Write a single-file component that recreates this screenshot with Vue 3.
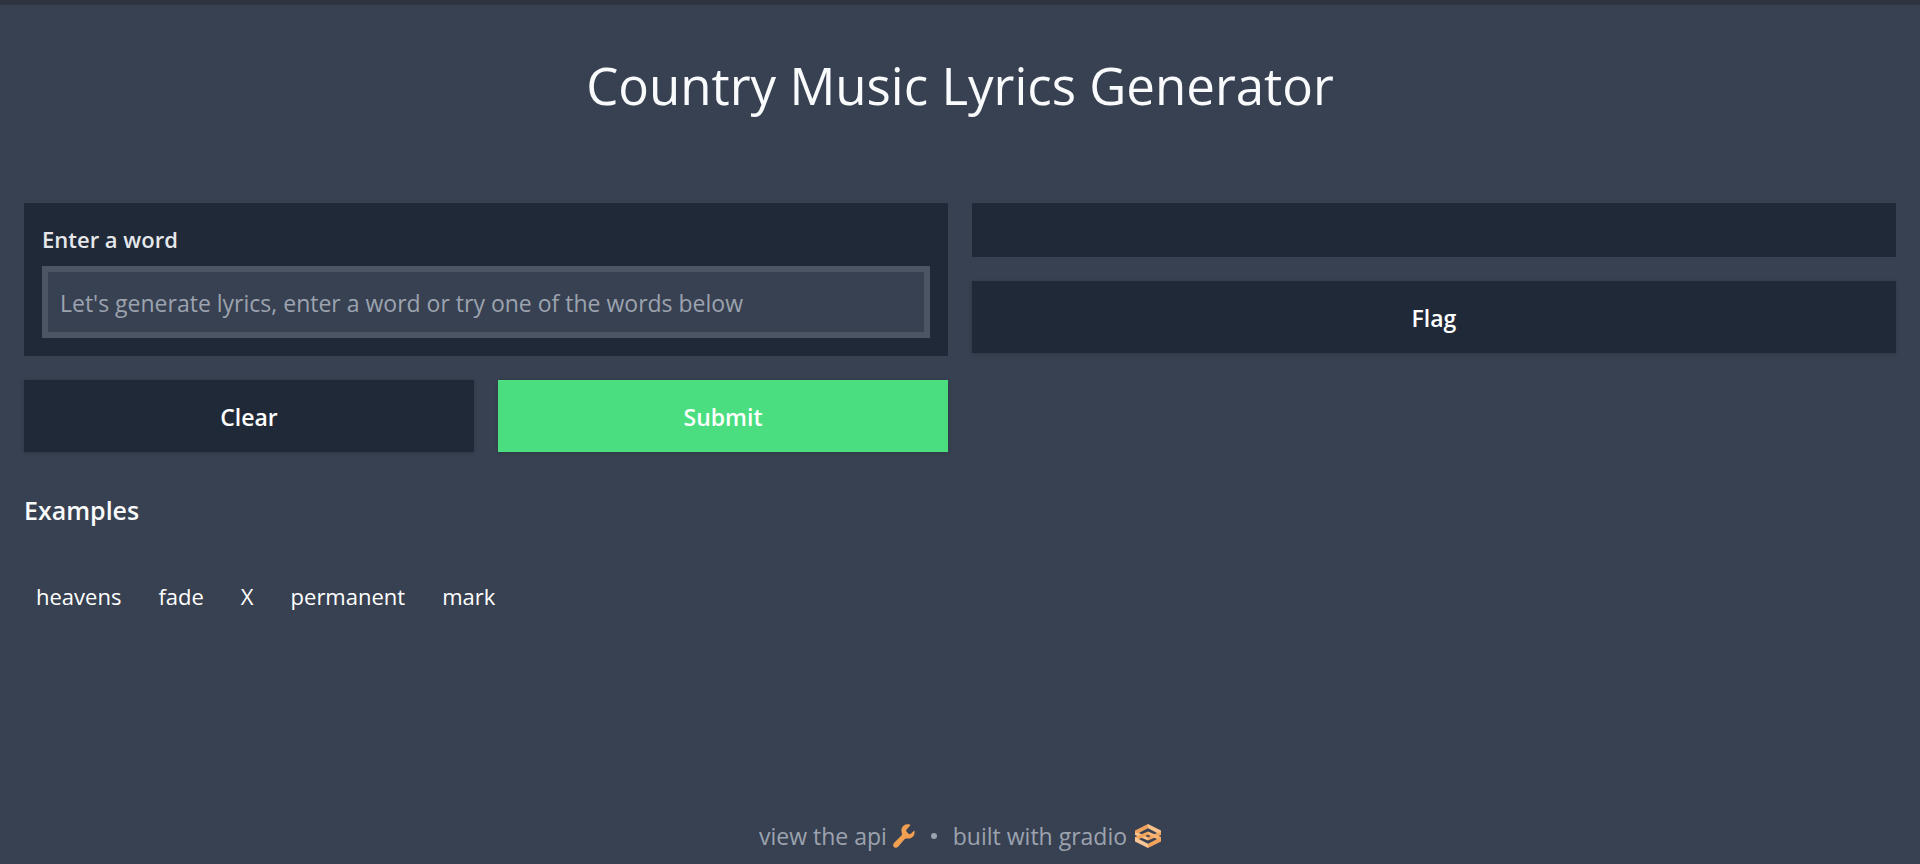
<script setup>
import { ref } from 'vue'

const word = ref('')
const examples = ['heavens', 'fade', 'X', 'permanent', 'mark']
</script>

<template>
  <div class="page">
    <h1>Country Music Lyrics Generator</h1>

    <main class="columns">
      <form class="column" @submit.prevent>
        <div class="panel field">
          <label for="word">Enter a word</label>
          <input
            id="word"
            v-model="word"
            type="text"
            placeholder="Let's generate lyrics, enter a word or try one of the words below"
          />
        </div>
        <div class="actions">
          <button type="button" @click="word = ''">Clear</button>
          <button type="submit" class="primary">Submit</button>
        </div>
      </form>
      <div class="column">
        <div class="panel output"></div>
        <button type="button">Flag</button>
      </div>
    </main>

    <section class="examples">
      <h2>Examples</h2>
      <div class="samples">
        <button v-for="item in examples" :key="item" type="button" class="sample" @click="word = item">{{ item }}</button>
      </div>
    </section>

    <footer>
      <a href="#api" class="api">view the api
        <svg width="22" height="24" viewBox="0 0 22 24" aria-hidden="true">
          <path fill="#f0a050" d="M16.8.6C13.200-.6 9.600 1.200 8.700 4.500C8.200 6.200 8.400 7.700 8.900 9.200C9.200 10.200 8.900 11 8.200 11.700L1.200 18.700C-.2 20.200-.2 22 .9 23C2 24.100 3.900 24.100 5.100 22.700L11.300 15.500C12 14.700 12.900 14.400 13.900 14.500C18.400 15.200 21.800 12 21.600 7.800C21.600 6.900 21.300 6.500 20.800 7L17.700 9.800C16.900 10.400 16.200 10.300 15.500 9.700L13.700 7.800C13 7 13 6.200 13.600 5.500L17 1.800C17.500 1.200 17.300.8 16.800.6Z" />
        </svg>
      </a>
      <span class="dot"></span>
      <a href="#gradio">built with gradio
        <svg width="26" height="24" viewBox="0 0 26 24" aria-hidden="true">
          <path fill="#f0a260" d="M13 0L0 6.500V11L13 4.300Z" />
          <path fill="#f8c08a" d="M13 0L26 6.500V11L13 4.300Z" />
          <path fill="#f8c08a" d="M0 8.500V11L13 16.500V13L4 9Z" />
          <path fill="#f0a260" d="M26 8.500V11L13 16.500V13L22 9Z" />
          <path fill="#f3a45c" d="M0 15.500V13L13 7.500V11L4 15Z" />
          <path fill="#f8b474" d="M26 15.500V13L13 7.500V11L22 15Z" />
          <path fill="#f9c797" d="M13 24L0 17.500V13L13 19.700Z" />
          <path fill="#f3a45c" d="M13 24L26 17.500V13L13 19.700Z" />
          <path fill="#5f4d4a" d="M13 10.400L15.400 12L13 13.600L10.600 12Z" />
        </svg>
      </a>
    </footer>
  </div>
</template>

<style>
body {
  margin: 0;
  background: #384151;
}
</style>

<style scoped>
.page {
  box-sizing: border-box;
  min-height: 100vh;
  display: flex;
  flex-direction: column;
  padding: 44px 24px 10px;
  border-top: 5px solid #303440;
  color: #f9fafb;
  font-family: "Segoe UI", "Open Sans", "Noto Sans", sans-serif;
  font-size: 23px;
  line-height: 36px;
}

h1 {
  margin: 0 0 82px;
  font-size: 51px;
  font-weight: 400;
  line-height: 72px;
  text-align: center;
}

.columns {
  display: grid;
  grid-template-columns: 1fr 1fr;
  gap: 24px;
}

.column {
  display: flex;
  flex-direction: column;
  gap: 24px;
}

.panel {
  padding: 18px;
  background: #202937;
}

.output {
  height: 18px;
}

.field {
  display: flex;
  flex-direction: column;
}

label {
  padding-bottom: 9px;
  color: #e5e7eb;
  font-size: 22px;
  font-weight: 600;
}

input {
  box-sizing: border-box;
  width: 100%;
  height: 72px;
  padding: 2px 12px 0;
  border: 6px solid #4b5563;
  border-radius: 0;
  outline: none;
  background: #384151;
  color: #f9fafb;
  font: inherit;
}

input::placeholder {
  color: #9ca3af;
  opacity: 1;
}

button {
  height: 72px;
  padding: 2px 12px 0;
  border: 0;
  background: #202937;
  box-shadow: 0 1px 4px rgba(0, 0, 0, 0.15);
  color: #ffffff;
  font: inherit;
  font-weight: 600;
  cursor: pointer;
}

.actions {
  display: grid;
  grid-template-columns: 1fr 1fr;
  gap: 24px;
}

.primary {
  background: #4ade80;
}

h2 {
  margin: 40px 0 48px;
  font-size: 25px;
  font-weight: 600;
  line-height: 36px;
}

.samples {
  display: flex;
  gap: 13px;
}

.sample {
  height: auto;
  background: none;
  box-shadow: none;
  font-size: 22px;
  font-weight: 400;
  line-height: 36px;
}

footer {
  display: flex;
  justify-content: center;
  align-items: center;
  gap: 16px;
  margin-top: auto;
  color: #9ca3af;
}

footer a {
  display: flex;
  align-items: center;
  gap: 8px;
  color: inherit;
  text-decoration: none;
}

footer .api {
  gap: 6px;
}

.dot {
  width: 6px;
  height: 6px;
  border-radius: 50%;
  background: #9ca3af;
}
</style>
